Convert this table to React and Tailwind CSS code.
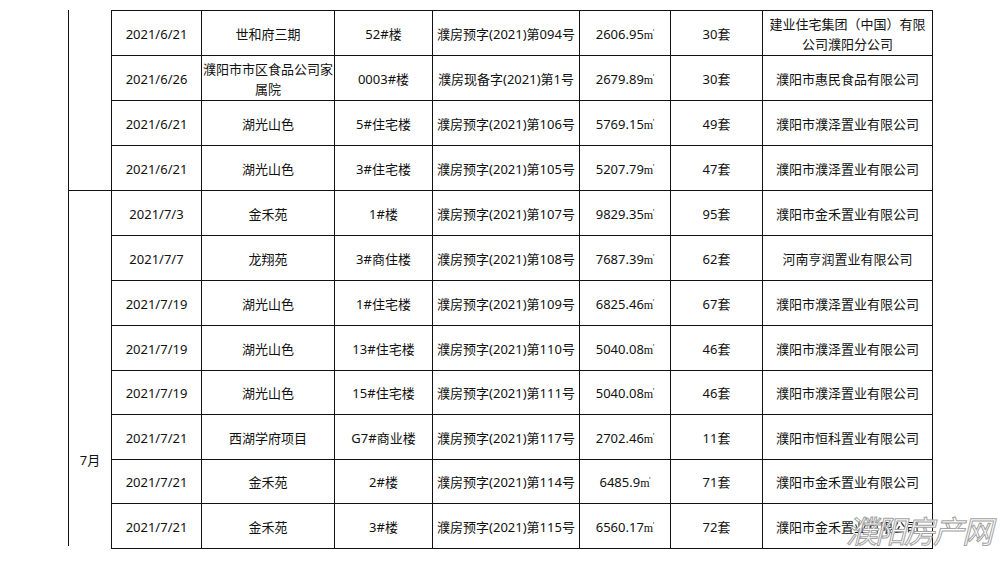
import React from 'react';

const cols = ['w-[90px]', 'w-[133px]', 'w-[98px]', 'w-[147px]', 'w-[91px]', 'w-[92px]', 'w-[170px]'];
const heights = ['h-[45px]', 'h-[45px]', 'h-[45px]', 'h-[45px]', 'h-[45px]', 'h-[45px]', 'h-[45px]', 'h-[45px]', 'h-[44px]', 'h-[45px]', 'h-[44px]', 'h-[45px]'];

const rows = [
    ['2021/6/21', '世和府三期', '52#楼', '濮房预字(2021)第094号', '2606.95', '30套', ['建业住宅集团（中国）有限', '公司濮阳分公司']],
    ['2021/6/26', ['濮阳市市区食品公司家', '属院'], '0003#楼', '濮房现备字(2021)第1号', '2679.89', '30套', '濮阳市惠民食品有限公司'],
    ['2021/6/21', '湖光山色', '5#住宅楼', '濮房预字(2021)第106号', '5769.15', '49套', '濮阳市濮泽置业有限公司'],
    ['2021/6/21', '湖光山色', '3#住宅楼', '濮房预字(2021)第105号', '5207.79', '47套', '濮阳市濮泽置业有限公司'],
    ['2021/7/3', '金禾苑', '1#楼', '濮房预字(2021)第107号', '9829.35', '95套', '濮阳市金禾置业有限公司'],
    ['2021/7/7', '龙翔苑', '3#商住楼', '濮房预字(2021)第108号', '7687.39', '62套', '河南亨润置业有限公司'],
    ['2021/7/19', '湖光山色', '1#住宅楼', '濮房预字(2021)第109号', '6825.46', '67套', '濮阳市濮泽置业有限公司'],
    ['2021/7/19', '湖光山色', '13#住宅楼', '濮房预字(2021)第110号', '5040.08', '46套', '濮阳市濮泽置业有限公司'],
    ['2021/7/19', '湖光山色', '15#住宅楼', '濮房预字(2021)第111号', '5040.08', '46套', '濮阳市濮泽置业有限公司'],
    ['2021/7/21', '西湖学府项目', 'G7#商业楼', '濮房预字(2021)第117号', '2702.46', '11套', '濮阳市恒科置业有限公司'],
    ['2021/7/21', '金禾苑', '2#楼', '濮房预字(2021)第114号', '6485.9', '71套', '濮阳市金禾置业有限公司'],
    ['2021/7/21', '金禾苑', '3#楼', '濮房预字(2021)第115号', '6560.17', '72套', '濮阳市金禾置业有限公司'],
];

function Cell({ value, width, area }) {
    return (
        <div className={`${width} shrink-0 h-full flex items-center justify-center text-center border-r border-b border-[#111]`}>
            {Array.isArray(value) ? (
                <span className="pt-[2px] leading-[20px]">
                    {value[0]}
                    <br />
                    {value[1]}
                </span>
            ) : area ? (
                <span className="pt-[3px]">
                    {value}
                    <span className="text-[12px] font-['Liberation_Serif'] tracking-[-0.5px]">m</span>
                    <span className="text-[7px] align-[5px]">'</span>
                </span>
            ) : (
                <span className="pt-[3px]">{value}</span>
            )}
        </div>
    );
}

export default function App() {
    return (
        <div
            className="relative w-[1000px] h-[564px] bg-white overflow-hidden text-[13px] text-[#111]"
            style={{ fontFamily: '"Noto Sans", "Noto Sans CJK SC", sans-serif' }}
        >
            <div className="flex pt-[10px] pl-[68px]">
                {/* month column */}
                <div className="w-[43px] shrink-0 flex flex-col h-[536px]">
                    <div className="h-[180px] border-l border-[#111]"></div>
                    <div className="flex-1 border-l border-t border-[#111] flex items-end justify-center pb-[76px]">
                        <span>7月</span>
                    </div>
                </div>

                {/* table body */}
                <div className="border-t border-l border-[#111] flex flex-col">
                    {rows.map((row, i) => (
                        <div key={i} className={`flex ${heights[i]}`}>
                            {row.map((v, j) => (
                                <Cell key={j} value={v} width={cols[j]} area={j === 4} />
                            ))}
                        </div>
                    ))}
                </div>
            </div>

            {/* watermark */}
            <div className="absolute left-[846px] top-[508px] text-[31px] italic tracking-[-2px] text-white [-webkit-text-stroke:1px_#a3a3a3] font-normal">
                濮阳房产网
            </div>
        </div>
    );
}
